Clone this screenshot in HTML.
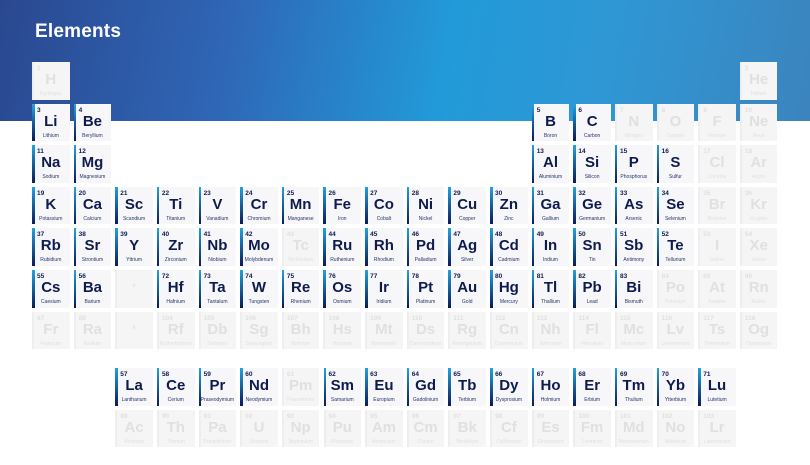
<!DOCTYPE html>
<html><head><meta charset="utf-8"><style>
*{margin:0;padding:0;box-sizing:border-box}
body{width:810px;height:465px;overflow:hidden;background:#fff;font-family:"Liberation Sans",sans-serif;position:relative}
.hdr{position:absolute;left:0;top:0;width:810px;height:121px;background:linear-gradient(100deg,#2a4890 0%,#2f66b6 28%,#229ad9 55%,#2f97d4 75%,#3b84be 100%)}
h1{position:absolute;left:35px;top:21px;color:#fff;font-size:19px;font-weight:bold;letter-spacing:0.2px}
.g{position:absolute;display:grid;grid-template-columns:repeat(18,37.6px);grid-auto-rows:37.6px;column-gap:4.05px;row-gap:4px}
.g1{left:32px;top:62px}
.g2{left:115.3px;top:368px;grid-template-columns:repeat(15,37.6px)}
.g>div{position:relative;text-align:center}
.a{background:#f7f7f9;color:#0d1b4f}
.a::before{content:"";position:absolute;left:0;top:0;width:2.5px;height:100%;background:linear-gradient(#22a3de,#0a1a5a)}
.i{background:#f5f5f6;color:#e0e0e0}
.i::before{content:"";position:absolute;left:0;top:0;width:2px;height:100%;background:#eeeef0}
.n{position:absolute;left:5px;top:3px;font-size:6.5px;font-weight:bold}
.y{position:absolute;left:0;right:0;top:9px;font-size:15px;font-weight:bold;line-height:17px}
.m{position:absolute;left:0;right:0;top:29px;font-size:5px;white-space:nowrap;overflow:hidden}
.a .m{color:#25346a}
.st{position:absolute;left:0;right:0;top:12px;font-size:9px;color:#dcdcdc}
</style></head><body>
<div class="hdr"></div>
<h1>Elements</h1>
<div class="g g1">
<div class="i"><span class="n">1</span><span class="y">H</span><span class="m">Hydrogen</span></div>
<div class="i" style="grid-column:18"><span class="n">2</span><span class="y">He</span><span class="m">Helium</span></div>
<div class="a"><span class="n">3</span><span class="y">Li</span><span class="m">Lithium</span></div>
<div class="a"><span class="n">4</span><span class="y">Be</span><span class="m">Beryllium</span></div>
<div class="a" style="grid-column:13"><span class="n">5</span><span class="y">B</span><span class="m">Boron</span></div>
<div class="a"><span class="n">6</span><span class="y">C</span><span class="m">Carbon</span></div>
<div class="i"><span class="n">7</span><span class="y">N</span><span class="m">Nitrogen</span></div>
<div class="i"><span class="n">8</span><span class="y">O</span><span class="m">Oxygen</span></div>
<div class="i"><span class="n">9</span><span class="y">F</span><span class="m">Fluorine</span></div>
<div class="i"><span class="n">10</span><span class="y">Ne</span><span class="m">Neon</span></div>
<div class="a"><span class="n">11</span><span class="y">Na</span><span class="m">Sodium</span></div>
<div class="a"><span class="n">12</span><span class="y">Mg</span><span class="m">Magnesium</span></div>
<div class="a" style="grid-column:13"><span class="n">13</span><span class="y">Al</span><span class="m">Aluminium</span></div>
<div class="a"><span class="n">14</span><span class="y">Si</span><span class="m">Silicon</span></div>
<div class="a"><span class="n">15</span><span class="y">P</span><span class="m">Phosphorus</span></div>
<div class="a"><span class="n">16</span><span class="y">S</span><span class="m">Sulfur</span></div>
<div class="i"><span class="n">17</span><span class="y">Cl</span><span class="m">Chlorine</span></div>
<div class="i"><span class="n">18</span><span class="y">Ar</span><span class="m">Argon</span></div>
<div class="a"><span class="n">19</span><span class="y">K</span><span class="m">Potassium</span></div>
<div class="a"><span class="n">20</span><span class="y">Ca</span><span class="m">Calcium</span></div>
<div class="a"><span class="n">21</span><span class="y">Sc</span><span class="m">Scandium</span></div>
<div class="a"><span class="n">22</span><span class="y">Ti</span><span class="m">Titanium</span></div>
<div class="a"><span class="n">23</span><span class="y">V</span><span class="m">Vanadium</span></div>
<div class="a"><span class="n">24</span><span class="y">Cr</span><span class="m">Chromium</span></div>
<div class="a"><span class="n">25</span><span class="y">Mn</span><span class="m">Manganese</span></div>
<div class="a"><span class="n">26</span><span class="y">Fe</span><span class="m">Iron</span></div>
<div class="a"><span class="n">27</span><span class="y">Co</span><span class="m">Cobalt</span></div>
<div class="a"><span class="n">28</span><span class="y">Ni</span><span class="m">Nickel</span></div>
<div class="a"><span class="n">29</span><span class="y">Cu</span><span class="m">Copper</span></div>
<div class="a"><span class="n">30</span><span class="y">Zn</span><span class="m">Zinc</span></div>
<div class="a"><span class="n">31</span><span class="y">Ga</span><span class="m">Gallium</span></div>
<div class="a"><span class="n">32</span><span class="y">Ge</span><span class="m">Germanium</span></div>
<div class="a"><span class="n">33</span><span class="y">As</span><span class="m">Arsenic</span></div>
<div class="a"><span class="n">34</span><span class="y">Se</span><span class="m">Selenium</span></div>
<div class="i"><span class="n">35</span><span class="y">Br</span><span class="m">Bromine</span></div>
<div class="i"><span class="n">36</span><span class="y">Kr</span><span class="m">Krypton</span></div>
<div class="a"><span class="n">37</span><span class="y">Rb</span><span class="m">Rubidium</span></div>
<div class="a"><span class="n">38</span><span class="y">Sr</span><span class="m">Strontium</span></div>
<div class="a"><span class="n">39</span><span class="y">Y</span><span class="m">Yttrium</span></div>
<div class="a"><span class="n">40</span><span class="y">Zr</span><span class="m">Zirconium</span></div>
<div class="a"><span class="n">41</span><span class="y">Nb</span><span class="m">Niobium</span></div>
<div class="a"><span class="n">42</span><span class="y">Mo</span><span class="m">Molybdenum</span></div>
<div class="i"><span class="n">43</span><span class="y">Tc</span><span class="m">Technetium</span></div>
<div class="a"><span class="n">44</span><span class="y">Ru</span><span class="m">Ruthenium</span></div>
<div class="a"><span class="n">45</span><span class="y">Rh</span><span class="m">Rhodium</span></div>
<div class="a"><span class="n">46</span><span class="y">Pd</span><span class="m">Palladium</span></div>
<div class="a"><span class="n">47</span><span class="y">Ag</span><span class="m">Silver</span></div>
<div class="a"><span class="n">48</span><span class="y">Cd</span><span class="m">Cadmium</span></div>
<div class="a"><span class="n">49</span><span class="y">In</span><span class="m">Indium</span></div>
<div class="a"><span class="n">50</span><span class="y">Sn</span><span class="m">Tin</span></div>
<div class="a"><span class="n">51</span><span class="y">Sb</span><span class="m">Antimony</span></div>
<div class="a"><span class="n">52</span><span class="y">Te</span><span class="m">Tellurium</span></div>
<div class="i"><span class="n">53</span><span class="y">I</span><span class="m">Iodine</span></div>
<div class="i"><span class="n">54</span><span class="y">Xe</span><span class="m">Xenon</span></div>
<div class="a"><span class="n">55</span><span class="y">Cs</span><span class="m">Caesium</span></div>
<div class="a"><span class="n">56</span><span class="y">Ba</span><span class="m">Barium</span></div>
<div class="i"><span class="st">*</span></div>
<div class="a"><span class="n">72</span><span class="y">Hf</span><span class="m">Hafnium</span></div>
<div class="a"><span class="n">73</span><span class="y">Ta</span><span class="m">Tantalum</span></div>
<div class="a"><span class="n">74</span><span class="y">W</span><span class="m">Tungsten</span></div>
<div class="a"><span class="n">75</span><span class="y">Re</span><span class="m">Rhenium</span></div>
<div class="a"><span class="n">76</span><span class="y">Os</span><span class="m">Osmium</span></div>
<div class="a"><span class="n">77</span><span class="y">Ir</span><span class="m">Iridium</span></div>
<div class="a"><span class="n">78</span><span class="y">Pt</span><span class="m">Platinum</span></div>
<div class="a"><span class="n">79</span><span class="y">Au</span><span class="m">Gold</span></div>
<div class="a"><span class="n">80</span><span class="y">Hg</span><span class="m">Mercury</span></div>
<div class="a"><span class="n">81</span><span class="y">Tl</span><span class="m">Thallium</span></div>
<div class="a"><span class="n">82</span><span class="y">Pb</span><span class="m">Lead</span></div>
<div class="a"><span class="n">83</span><span class="y">Bi</span><span class="m">Bismuth</span></div>
<div class="i"><span class="n">84</span><span class="y">Po</span><span class="m">Polonium</span></div>
<div class="i"><span class="n">85</span><span class="y">At</span><span class="m">Astatine</span></div>
<div class="i"><span class="n">86</span><span class="y">Rn</span><span class="m">Radon</span></div>
<div class="i"><span class="n">87</span><span class="y">Fr</span><span class="m">Francium</span></div>
<div class="i"><span class="n">88</span><span class="y">Ra</span><span class="m">Radium</span></div>
<div class="i"><span class="st">*</span></div>
<div class="i"><span class="n">104</span><span class="y">Rf</span><span class="m">Rutherfordium</span></div>
<div class="i"><span class="n">105</span><span class="y">Db</span><span class="m">Dubnium</span></div>
<div class="i"><span class="n">106</span><span class="y">Sg</span><span class="m">Seaborgium</span></div>
<div class="i"><span class="n">107</span><span class="y">Bh</span><span class="m">Bohrium</span></div>
<div class="i"><span class="n">108</span><span class="y">Hs</span><span class="m">Hassium</span></div>
<div class="i"><span class="n">109</span><span class="y">Mt</span><span class="m">Meitnerium</span></div>
<div class="i"><span class="n">110</span><span class="y">Ds</span><span class="m">Darmstadtium</span></div>
<div class="i"><span class="n">111</span><span class="y">Rg</span><span class="m">Roentgenium</span></div>
<div class="i"><span class="n">112</span><span class="y">Cn</span><span class="m">Copernicium</span></div>
<div class="i"><span class="n">113</span><span class="y">Nh</span><span class="m">Nihonium</span></div>
<div class="i"><span class="n">114</span><span class="y">Fl</span><span class="m">Flerovium</span></div>
<div class="i"><span class="n">115</span><span class="y">Mc</span><span class="m">Moscovium</span></div>
<div class="i"><span class="n">116</span><span class="y">Lv</span><span class="m">Livermorium</span></div>
<div class="i"><span class="n">117</span><span class="y">Ts</span><span class="m">Tennessine</span></div>
<div class="i"><span class="n">118</span><span class="y">Og</span><span class="m">Oganesson</span></div>
</div>
<div class="g g2">
<div class="a"><span class="n">57</span><span class="y">La</span><span class="m">Lanthanum</span></div>
<div class="a"><span class="n">58</span><span class="y">Ce</span><span class="m">Cerium</span></div>
<div class="a"><span class="n">59</span><span class="y">Pr</span><span class="m">Praseodymium</span></div>
<div class="a"><span class="n">60</span><span class="y">Nd</span><span class="m">Neodymium</span></div>
<div class="i"><span class="n">61</span><span class="y">Pm</span><span class="m">Promethium</span></div>
<div class="a"><span class="n">62</span><span class="y">Sm</span><span class="m">Samarium</span></div>
<div class="a"><span class="n">63</span><span class="y">Eu</span><span class="m">Europium</span></div>
<div class="a"><span class="n">64</span><span class="y">Gd</span><span class="m">Gadolinium</span></div>
<div class="a"><span class="n">65</span><span class="y">Tb</span><span class="m">Terbium</span></div>
<div class="a"><span class="n">66</span><span class="y">Dy</span><span class="m">Dysprosium</span></div>
<div class="a"><span class="n">67</span><span class="y">Ho</span><span class="m">Holmium</span></div>
<div class="a"><span class="n">68</span><span class="y">Er</span><span class="m">Erbium</span></div>
<div class="a"><span class="n">69</span><span class="y">Tm</span><span class="m">Thulium</span></div>
<div class="a"><span class="n">70</span><span class="y">Yb</span><span class="m">Ytterbium</span></div>
<div class="a"><span class="n">71</span><span class="y">Lu</span><span class="m">Lutetium</span></div>
<div class="i"><span class="n">89</span><span class="y">Ac</span><span class="m">Actinium</span></div>
<div class="i"><span class="n">90</span><span class="y">Th</span><span class="m">Thorium</span></div>
<div class="i"><span class="n">91</span><span class="y">Pa</span><span class="m">Protactinium</span></div>
<div class="i"><span class="n">92</span><span class="y">U</span><span class="m">Uranium</span></div>
<div class="i"><span class="n">93</span><span class="y">Np</span><span class="m">Neptunium</span></div>
<div class="i"><span class="n">94</span><span class="y">Pu</span><span class="m">Plutonium</span></div>
<div class="i"><span class="n">95</span><span class="y">Am</span><span class="m">Americium</span></div>
<div class="i"><span class="n">96</span><span class="y">Cm</span><span class="m">Curium</span></div>
<div class="i"><span class="n">97</span><span class="y">Bk</span><span class="m">Berkelium</span></div>
<div class="i"><span class="n">98</span><span class="y">Cf</span><span class="m">Californium</span></div>
<div class="i"><span class="n">99</span><span class="y">Es</span><span class="m">Einsteinium</span></div>
<div class="i"><span class="n">100</span><span class="y">Fm</span><span class="m">Fermium</span></div>
<div class="i"><span class="n">101</span><span class="y">Md</span><span class="m">Mendelevium</span></div>
<div class="i"><span class="n">102</span><span class="y">No</span><span class="m">Nobelium</span></div>
<div class="i"><span class="n">103</span><span class="y">Lr</span><span class="m">Lawrencium</span></div>
</div>
</body></html>
